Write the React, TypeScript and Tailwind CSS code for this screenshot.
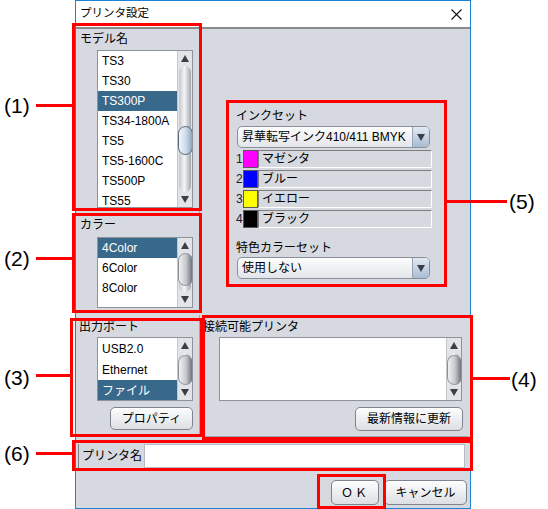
import React from "react";

function Tri({ down }: { down?: boolean }) {
  return (
    <svg width="8" height="7" viewBox="0 0 8 7">
      {down ? <polygon points="0,0 8,0 4,7" fill="#3a3f47" /> : <polygon points="0,7 8,7 4,0" fill="#3a3f47" />}
    </svg>
  );
}

function ScrollBar({ thumb, blue }: { thumb: string; blue?: boolean }) {
  return (
    <div className="flex w-[15px] shrink-0 flex-col border-l border-[#c3c6cc] bg-[#e2e4e8]">
      <div className="flex h-[15px] shrink-0 items-center justify-center">
        <Tri />
      </div>
      <div className="relative mx-[1px] flex-1 rounded-[6px] bg-[linear-gradient(to_right,#c4c7cd,#f4f5f7_45%,#a3a7ae)]">
        <div
          className={
            "absolute left-[-1px] right-[-2px] rounded-full border " +
            (blue
              ? "border-[#566476] bg-[linear-gradient(to_right,#f3f7fb,#cad9e8_55%,#8fa5bf)] "
              : "border-[#8b9098] bg-[linear-gradient(to_right,#f0f1f3,#c4c7cd_55%,#6f747c)] ") +
            thumb
          }
        />
      </div>
      <div className="flex h-[15px] shrink-0 items-center justify-center">
        <Tri down />
      </div>
    </div>
  );
}

function List({
  items,
  selected,
  box,
  row,
  thumb,
  blue,
}: {
  items: string[];
  selected: number;
  box: string;
  row: string;
  thumb: string;
  blue?: boolean;
}) {
  return (
    <div className={"flex overflow-hidden border border-[#8e939b] bg-white " + box}>
      <div className="flex-1 overflow-hidden">
        {items.map((it, i) => (
          <div
            key={it}
            className={
              "flex items-center pl-[4px] text-[12px] " +
              row +
              (i === selected ? " bg-[#39698a] text-white" : " text-black")
            }
          >
            {it}
          </div>
        ))}
      </div>
      <ScrollBar thumb={thumb} blue={blue} />
    </div>
  );
}

function Btn({ children, cls }: { children: React.ReactNode; cls: string }) {
  return (
    <div
      className={
        "flex items-center justify-center rounded-[5px] border border-[#7f858e] bg-[linear-gradient(#fdfdfd,#dcdfe4)] text-[12px] text-black shadow-[inset_0_1px_0_#ffffff] " +
        cls
      }
    >
      {children}
    </div>
  );
}

function Combo({ text }: { text: string }) {
  return (
    <div className="flex h-[22px] w-[193px] overflow-hidden rounded-[5px] border border-[#8a909a] bg-[linear-gradient(#fdfdfd,#e2e5ea)]">
      <div className="flex flex-1 items-center pl-[4px] text-[12px] text-black">{text}</div>
      <div className="flex w-[17px] items-center justify-center border-l border-[#98a4b3] bg-[linear-gradient(#e2eaf3,#a8bcd2)]">
        <Tri down />
      </div>
    </div>
  );
}

function InkRow({ n, color, name }: { n: string; color: string; name: string }) {
  return (
    <div className="flex h-[18px] items-center">
      <span className="w-[7px] text-[12px] leading-none text-[#1a1a2a]">{n}</span>
      <div className={"h-[18px] w-[15px] border border-[#5a5a5a] " + color} />
      <div className="flex h-[18px] w-[174px] items-center border border-[#7d7d7d] border-r-white border-b-white pl-[3px] text-[12px] text-black">
        {name}
      </div>
    </div>
  );
}

function Label({ children, cls }: { children: React.ReactNode; cls: string }) {
  return <div className={"h-[16px] text-[12px] leading-[16px] text-black " + cls}>{children}</div>;
}

export default function App() {
  return (
    <div className="relative h-[509px] w-[548px] overflow-hidden bg-white font-['Liberation_Sans','Noto_Sans_CJK_JP',sans-serif]">
      {/* dialog */}
      <div className="ml-[75px] flex h-[509px] w-[396px] flex-col border border-[#1883d7] bg-white">
        <div className="flex h-[26px] shrink-0 items-center justify-between pl-[4px] pr-[8px]">
          <span className="text-[11.5px] text-black">プリンタ設定</span>
          <svg width="11" height="11" viewBox="0 0 11 11">
            <path d="M0.5 0.5 L10.5 10.5 M10.5 0.5 L0.5 10.5" stroke="#111" strokeWidth="1.1" />
          </svg>
        </div>
        <div className="flex flex-1 flex-col border-t-2 border-[#8a8a8a] bg-[#d6d9df]">
          {/* top section */}
          <div className="flex h-[286px] shrink-0">
            <div className="ml-[1px] flex w-[123px] flex-col">
              <div className="flex h-[184px] flex-col border-r border-[#a1a5ad] pt-[2px]">
                <Label cls="pl-[3px]">モデル名</Label>
                <List
                  items={["TS3", "TS30", "TS300P", "TS34-1800A", "TS5", "TS5-1600C", "TS500P", "TS55"]}
                  selected={2}
                  box="ml-[20px] mt-[3px] h-[158px] w-[96px]"
                  row="h-[20px] shrink-0"
                  thumb="top-[60px] h-[29px]"
                  blue
                />
              </div>
              <div className="mt-[2px] flex h-[98px] flex-col border-r border-[#a1a5ad] pt-[2px]">
                <Label cls="pl-[3px]">カラー</Label>
                <List
                  items={["4Color", "6Color", "8Color"]}
                  selected={0}
                  box="ml-[20px] mt-[4px] h-[71px] w-[96px]"
                  row="h-[20px] shrink-0"
                  thumb="top-[0px] h-[33px]"
                />
              </div>
            </div>
            <div className="flex flex-1 flex-col pl-[36px] pt-[79px]">
              <Label cls="">インクセット</Label>
              <div className="ml-[1px] mt-[2px]">
                <Combo text="昇華転写インク410/411 BMYK" />
              </div>
              <div className="mt-[2px] flex flex-col gap-[2px]">
                <InkRow n="1" color="bg-[#ff00ff]" name="マゼンタ" />
                <InkRow n="2" color="bg-[#0000ff]" name="ブルー" />
                <InkRow n="3" color="bg-[#ffff00]" name="イエロー" />
                <InkRow n="4" color="bg-[#000000]" name="ブラック" />
              </div>
              <Label cls="mt-[12px]">特色カラーセット</Label>
              <div className="ml-[1px] mt-[1px]">
                <Combo text="使用しない" />
              </div>
            </div>
          </div>
          {/* middle */}
          <div className="flex h-[122px] shrink-0">
            <div className="ml-[1px] flex w-[123px] flex-col border-r border-b border-[#a1a5ad] pt-[4px]">
              <Label cls="pl-[2px]">出力ポート</Label>
              <List
                items={["USB2.0", "Ethernet", "ファイル"]}
                selected={2}
                box="ml-[20px] mt-[2px] h-[64px] w-[96px]"
                row="h-[21px] shrink-0"
                thumb="top-[2px] h-[30px]"
              />
              <Btn cls="ml-[33px] mt-[6px] h-[23px] w-[83px]">プロパティ</Btn>
            </div>
            <div className="mr-[1px] flex flex-1 flex-col border-b border-[#a1a5ad] pt-[4px]">
              <Label cls="pl-[3px]">接続可能プリンタ</Label>
              <List
                items={[]}
                selected={-1}
                box="ml-[19px] mt-[2px] h-[64px] w-[243px]"
                row="h-[21px]"
                thumb="top-[2px] h-[30px]"
              />
              <Btn cls="ml-[155px] mt-[6px] h-[24px] w-[108px]">最新情報に更新</Btn>
            </div>
          </div>
          {/* printer name */}
          <div className="ml-[2px] mr-[5px] mt-[7px] flex h-[24px] shrink-0">
            <div className="flex w-[66px] items-center border-l border-[#7a7e86] pl-[3px] text-[12px] text-black">
              プリンタ名
            </div>
            <div className="flex-1 border border-[#b6bac2] bg-white" />
          </div>
          {/* buttons */}
          <div className="mr-[3px] mt-[12px] flex justify-end gap-[5px]">
            <Btn cls="h-[25px] w-[48px] tracking-[2px]">ＯＫ</Btn>
            <Btn cls="h-[25px] w-[83px]">キャンセル</Btn>
          </div>
        </div>
      </div>

      {/* annotations: red boxes */}
      <div className="pointer-events-none absolute left-[72px] top-[23px] h-[188px] w-[130px] border-[3px] border-[#ff0000]" />
      <div className="pointer-events-none absolute left-[72px] top-[213px] h-[100px] w-[130px] border-[3px] border-[#ff0000]" />
      <div className="pointer-events-none absolute left-[70px] top-[318px] h-[119px] w-[133px] border-[3px] border-[#ff0000]" />
      <div className="pointer-events-none absolute left-[202px] top-[315px] h-[125px] w-[271px] border-[3px] border-[#ff0000]" />
      <div className="pointer-events-none absolute left-[226px] top-[100px] h-[187px] w-[221px] border-[3px] border-[#ff0000]" />
      <div className="pointer-events-none absolute left-[72px] top-[440px] h-[31px] w-[401px] border-[3px] border-[#ff0000]" />
      <div className="pointer-events-none absolute left-[317px] top-[474px] h-[35px] w-[69px] border-[3px] border-[#ff0000]" />

      {/* leader lines */}
      <div className="absolute left-[36px] top-[104px] h-[3px] w-[36px] bg-[#ff0000]" />
      <div className="absolute left-[36px] top-[257px] h-[3px] w-[36px] bg-[#ff0000]" />
      <div className="absolute left-[36px] top-[374px] h-[3px] w-[34px] bg-[#ff0000]" />
      <div className="absolute left-[473px] top-[377px] h-[3px] w-[37px] bg-[#ff0000]" />
      <div className="absolute left-[447px] top-[200px] h-[3px] w-[60px] bg-[#ff0000]" />
      <div className="absolute left-[36px] top-[452px] h-[3px] w-[36px] bg-[#ff0000]" />

      {/* labels */}
      <div className="absolute left-[4px] top-[94px] text-[21px] leading-[23px] text-black">(1)</div>
      <div className="absolute left-[4px] top-[247px] text-[21px] leading-[23px] text-black">(2)</div>
      <div className="absolute left-[4px] top-[366px] text-[21px] leading-[23px] text-black">(3)</div>
      <div className="absolute left-[511px] top-[368px] text-[21px] leading-[23px] text-black">(4)</div>
      <div className="absolute left-[509px] top-[190px] text-[21px] leading-[23px] text-black">(5)</div>
      <div className="absolute left-[4px] top-[442px] text-[21px] leading-[23px] text-black">(6)</div>
    </div>
  );
}
